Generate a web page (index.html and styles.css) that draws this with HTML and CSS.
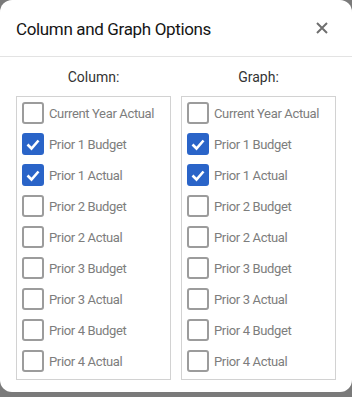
FILE: index.html
```html
<!DOCTYPE html>
<html>
<head>
<meta charset="utf-8">
<link rel="stylesheet" href="styles.css">
</head>
<body>
<div class="dialog">
  <div class="header">
    <div class="title">Column and Graph Options</div>
    <div class="close">
      <svg width="12" height="12" viewBox="0 0 12 12"><path d="M1 1 L11 11 M11 1 L1 11" stroke="#6f6f6f" stroke-width="2" stroke-linecap="butt"/></svg>
    </div>
  </div>
  <div class="body">
    <div class="col">
      <div class="col-title">Column:</div>
      <div class="list">
        <div class="row"><span class="cb"></span><span class="lbl">Current Year Actual</span></div>
        <div class="row"><span class="cb on"><svg viewBox="0 0 22 22" width="22" height="22"><path d="M5.5 11.5 L9.5 15.5 L16.5 7.5" fill="none" stroke="#fff" stroke-width="2.6"/></svg></span><span class="lbl">Prior 1 Budget</span></div>
        <div class="row"><span class="cb on"><svg viewBox="0 0 22 22" width="22" height="22"><path d="M5.5 11.5 L9.5 15.5 L16.5 7.5" fill="none" stroke="#fff" stroke-width="2.6"/></svg></span><span class="lbl">Prior 1 Actual</span></div>
        <div class="row"><span class="cb"></span><span class="lbl">Prior 2 Budget</span></div>
        <div class="row"><span class="cb"></span><span class="lbl">Prior 2 Actual</span></div>
        <div class="row"><span class="cb"></span><span class="lbl">Prior 3 Budget</span></div>
        <div class="row"><span class="cb"></span><span class="lbl">Prior 3 Actual</span></div>
        <div class="row"><span class="cb"></span><span class="lbl">Prior 4 Budget</span></div>
        <div class="row"><span class="cb"></span><span class="lbl">Prior 4 Actual</span></div>
      </div>
    </div>
    <div class="col">
      <div class="col-title">Graph:</div>
      <div class="list">
        <div class="row"><span class="cb"></span><span class="lbl">Current Year Actual</span></div>
        <div class="row"><span class="cb on"><svg viewBox="0 0 22 22" width="22" height="22"><path d="M5.5 11.5 L9.5 15.5 L16.5 7.5" fill="none" stroke="#fff" stroke-width="2.6"/></svg></span><span class="lbl">Prior 1 Budget</span></div>
        <div class="row"><span class="cb on"><svg viewBox="0 0 22 22" width="22" height="22"><path d="M5.5 11.5 L9.5 15.5 L16.5 7.5" fill="none" stroke="#fff" stroke-width="2.6"/></svg></span><span class="lbl">Prior 1 Actual</span></div>
        <div class="row"><span class="cb"></span><span class="lbl">Prior 2 Budget</span></div>
        <div class="row"><span class="cb"></span><span class="lbl">Prior 2 Actual</span></div>
        <div class="row"><span class="cb"></span><span class="lbl">Prior 3 Budget</span></div>
        <div class="row"><span class="cb"></span><span class="lbl">Prior 3 Actual</span></div>
        <div class="row"><span class="cb"></span><span class="lbl">Prior 4 Budget</span></div>
        <div class="row"><span class="cb"></span><span class="lbl">Prior 4 Actual</span></div>
      </div>
    </div>
  </div>
</div>
</body>
</html>
```
FILE: styles.css
```css
html, body { margin: 0; padding: 0; }
body {
  background: #7a7a7a;
  width: 352px;
  height: 397px;
  overflow: hidden;
  font-family: "Roboto", "Liberation Sans", sans-serif;
}
.dialog {
  background: #fff;
  width: 352px;
  height: 392px;
  border-radius: 12px;
  box-sizing: border-box;
}
.header {
  height: 56px;
  border-bottom: 1px solid #e3e3e3;
  display: flex;
  align-items: center;
  justify-content: space-between;
  padding: 0 16px 0 16px;
}
.title {
  font-size: 17px;
  color: #151515;
  padding-top: 1px;
  letter-spacing: -0.35px;
}
.close { width: 12px; height: 12px; margin-right: 8px; display: flex; }
.body {
  display: flex;
  gap: 10px;
  padding: 12px 16px 0 16px;
}
.col { width: 155px; }
.col-title {
  text-align: center;
  font-size: 14px;
  color: #333;
  height: 27px;
}
.list {
  border: 1px solid #d2d2d2;
  padding: 5px 0 7px 5px;
  display: flex;
  flex-direction: column;
  gap: 9px;
}
.row { display: flex; align-items: center; height: 22px; gap: 5px; }
.cb {
  width: 22px; height: 22px;
  box-sizing: border-box;
  border: 2px solid #9c9c9c;
  border-radius: 3px;
  flex: none;
}
.cb.on { background: #2a64c8; border-color: #2a64c8; position: relative; }
.cb.on svg { position: absolute; left: -2px; top: -2px; }
.lbl { font-size: 13px; color: #7d7d7d; letter-spacing: -0.35px; }
```
